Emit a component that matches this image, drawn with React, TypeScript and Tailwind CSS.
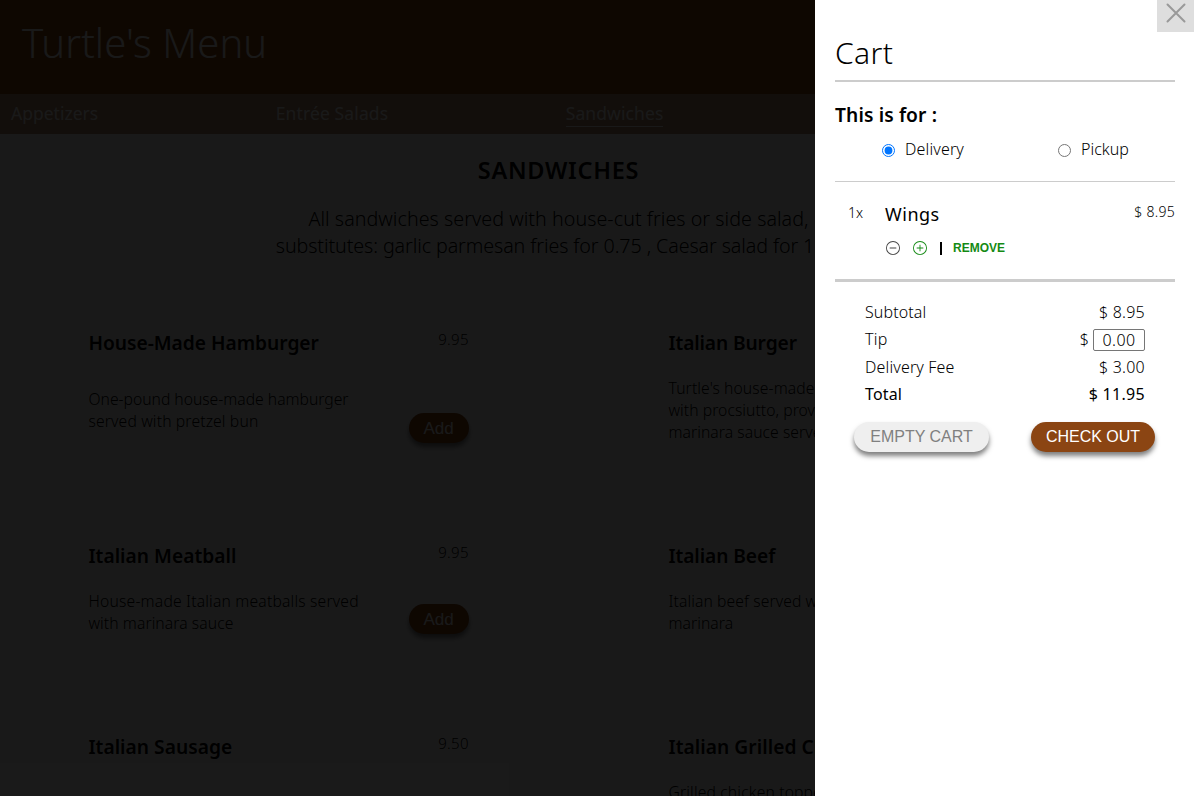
import React from 'react';

type MenuEntry = {
  title: string;
  titleTracking: string;
  price?: string;
  lines: { text: string; tracking: string }[];
  addable?: boolean;
};

type MenuRowData = { bodyHeight: string; entries: MenuEntry[] };

const menuRows: MenuRowData[] = [
  {
    bodyHeight: 'h-[66px]',
    entries: [
      {
        title: 'House-Made Hamburger',
        titleTracking: 'tracking-[-0.02px]',
        price: '9.95',
        lines: [
          { text: 'One-pound house-made hamburger', tracking: 'tracking-[-0.01px]' },
          { text: 'served with pretzel bun', tracking: 'tracking-[0.14px]' },
        ],
        addable: true,
      },
      {
        title: 'Italian Burger',
        titleTracking: 'tracking-[-0.12px]',
        lines: [
          { text: "Turtle's house-made", tracking: 'tracking-[0.1px]' },
          { text: 'with procsiutto, provolone', tracking: 'tracking-[0.05px]' },
          { text: 'marinara sauce served', tracking: 'tracking-[0.05px]' },
        ],
      },
    ],
  },
  {
    bodyHeight: 'h-[44px]',
    entries: [
      {
        title: 'Italian Meatball',
        titleTracking: 'tracking-[0.02px]',
        price: '9.95',
        lines: [
          { text: 'House-made Italian meatballs served', tracking: 'tracking-[0.18px]' },
          { text: 'with marinara sauce', tracking: 'tracking-[0.07px]' },
        ],
        addable: true,
      },
      {
        title: 'Italian Beef',
        titleTracking: 'tracking-[-0.08px]',
        lines: [
          { text: 'Italian beef served with', tracking: 'tracking-[0.1px]' },
          { text: 'marinara', tracking: 'tracking-[0.05px]' },
        ],
      },
    ],
  },
  {
    bodyHeight: 'h-[66px]',
    entries: [
      { title: 'Italian Sausage', titleTracking: 'tracking-[0.02px]', price: '9.50', lines: [] },
      {
        title: 'Italian Grilled Chicken',
        titleTracking: 'tracking-[0.05px]',
        lines: [
          { text: 'Grilled chicken topped', tracking: 'tracking-[0.14px]' },
          { text: '', tracking: '' },
          { text: '', tracking: '' },
        ],
      },
    ],
  },
];

function MenuItem({ entry, bodyHeight }: { entry: MenuEntry; bodyHeight: string }) {
  return (
    <article className="w-[380.5px] shrink-0">
      <div className="flex h-[49px] items-start justify-between whitespace-nowrap">
        <h3 className={`pt-1 text-[19.2px] leading-6 font-semibold ${entry.titleTracking}`}>{entry.title}</h3>
        {entry.price && (
          <span className="text-[15px] leading-6 font-light tracking-[0.37px]">{entry.price}</span>
        )}
      </div>
      <div className={`flex justify-between ${bodyHeight}`}>
        <div className="self-center pt-px text-[15.7px] leading-[22px] font-light whitespace-nowrap">
          {entry.lines.map((line, i) => (
            <p key={i} className={`min-h-[22px] ${line.tracking}`}>{line.text}</p>
          ))}
        </div>
        {entry.addable && (
          <button className="-mb-px h-[30px] w-[60px] self-end rounded-full bg-[#8b4513] pt-px pr-px font-['Liberation_Sans'] text-[17px] leading-[29px] text-white shadow-[0_4px_5px_rgba(0,0,0,0.5)]">
            Add
          </button>
        )}
      </div>
    </article>
  );
}

function MenuPage() {
  return (
    <div className="relative h-full w-[815px] shrink-0 overflow-hidden bg-white text-black">
      <header className="flex h-[94px] items-center bg-[#8b4513] pb-2 pl-[22px]">
        <h1 className="text-[40px] leading-[48px] font-light tracking-[0.1px] whitespace-nowrap text-white">Turtle's Menu</h1>
      </header>
      <nav className="flex h-10 items-start gap-[177.5px] bg-[#b48c6e] pt-[7px] pl-[11px] text-[17.5px] leading-[25px] whitespace-nowrap text-white">
        <a>Appetizers</a>
        <a className="tracking-[0.13px]">Entrée Salads</a>
        <a className="border-b border-white tracking-[0.09px]">Sandwiches</a>
      </nav>
      <main>
        <div className="w-[1117px] text-center">
          <h2 className="pt-[18px] text-[23.5px] leading-9 font-semibold tracking-[0.72px]">SANDWICHES</h2>
          <div className="pt-[17px] text-[19.7px] leading-[27px] font-light">
            <p className="tracking-[0.04px]">All sandwiches served with house-cut fries or side salad,</p>
            <p className="tracking-[-0.1px]">substitutes: garlic parmesan fries for 0.75 , Caesar salad for 1.50</p>
          </div>
        </div>
        <div className="flex flex-col gap-[98px] pt-[68px] pl-[88.5px]">
          {menuRows.map((row, i) => (
            <div key={i} className="flex gap-[199.5px]">
              {row.entries.map((entry) => (
                <MenuItem key={entry.title} entry={entry} bodyHeight={row.bodyHeight} />
              ))}
            </div>
          ))}
        </div>
      </main>
      <div className="absolute inset-0 bg-black/90" />
    </div>
  );
}

function CircleIcon({ plus = false }: { plus?: boolean }) {
  return (
    <svg width="14" height="14" viewBox="0 0 16 16" fill="currentColor">
      <path d="M8 15A7 7 0 1 1 8 1a7 7 0 0 1 0 14m0 1A8 8 0 1 0 8 0a8 8 0 0 0 0 16" />
      {plus ? (
        <path d="M8 4a.5.5 0 0 1 .5.5v3h3a.5.5 0 0 1 0 1h-3v3a.5.5 0 0 1-1 0v-3h-3a.5.5 0 0 1 0-1h3v-3A.5.5 0 0 1 8 4" />
      ) : (
        <path d="M4 8a.5.5 0 0 1 .5-.5h7a.5.5 0 0 1 0 1h-7A.5.5 0 0 1 4 8" />
      )}
    </svg>
  );
}

function CartPanel() {
  return (
    <aside className="flex h-full w-[379px] shrink-0 flex-col bg-white text-black">
      <div className="flex h-8 justify-end">
        <button aria-label="Close" className="flex h-8 w-[37px] items-start justify-center bg-[#dedede] pt-[2px] pl-px text-[#999]">
          <svg width="22" height="22" viewBox="0 0 22 22" fill="none" stroke="currentColor" strokeWidth="2" strokeLinecap="round">
            <path d="M2.5 2.5 19.5 19.5M19.5 2.5 2.5 19.5" />
          </svg>
        </button>
      </div>
      <div className="mr-[19px] ml-5 flex flex-col pt-0.5 font-light">
        <h2 className="h-12 border-b-2 border-[#ccc] pt-px text-[30px] leading-9 tracking-[0.4px]">Cart</h2>
        <h3 className="h-11 pt-[21px] text-[19.2px] leading-6 font-semibold tracking-[0.12px]">This is for :</h3>
        <div className="flex h-14 border-b border-[#ccc] pt-[11px] pl-[47px] text-base leading-6">
          <label className="flex h-6 w-[176px] items-start">
            <input type="radio" name="service" defaultChecked className="mt-[7px] mr-2.5 h-[13px] w-[13px]" />
            <span className="tracking-[0.15px]">Delivery</span>
          </label>
          <label className="flex h-6 items-start">
            <input type="radio" name="service" className="mt-[7px] mr-2.5 h-[13px] w-[13px]" />
            <span>Pickup</span>
          </label>
        </div>
        <div className="flex h-[100px] border-b-[3px] border-[#ccc] pt-[19px]">
          <span className="w-[50px] pl-[13px] text-sm leading-6">1x</span>
          <div className="grow">
            <p className="h-6 pt-px text-lg leading-6 font-normal tracking-[0.5px]">Wings</p>
            <div className="mt-4 flex h-[15px] items-start pl-px">
              <button className="mr-[13px] text-[#444]"><CircleIcon /></button>
              <button className="mr-[13px] text-[#148a14]"><CircleIcon plus /></button>
              <span className="mt-px mr-[11.5px] h-[13px] w-[1.5px] bg-black" />
              <button className="font-['Liberation_Sans'] text-xs leading-[14px] font-bold text-[#148a14]">REMOVE</button>
            </div>
          </div>
          <span className="-mt-0.5 text-sm leading-[25px] tracking-[0.3px]">$ 8.95</span>
        </div>
        <div className="flex flex-col px-[30px] pt-[17px] text-base leading-[27.33px]">
          <div className="flex justify-between"><span className="tracking-[0.1px]">Subtotal</span><span className="tracking-[0.25px]">$ 8.95</span></div>
          <div className="flex h-[27.33px] justify-between">
            <span className="tracking-[0.3px]">Tip</span>
            <span className="flex items-center">
              <span className="mr-1">$</span>
              <input defaultValue="0.00" className="mt-px h-[22px] w-[52px] rounded-[2px] border border-[#767676] text-center text-base font-light tracking-[0.45px]" />
            </span>
          </div>
          <div className="flex justify-between"><span className="tracking-[0.15px]">Delivery Fee</span><span className="tracking-[0.25px]">$ 3.00</span></div>
          <div className="flex justify-between font-normal"><span className="tracking-[0.15px]">Total</span><span className="tracking-[0.3px]">$ 11.95</span></div>
        </div>
        <div className="flex justify-between pt-[14px] pr-5 pl-[19px] font-['Liberation_Sans'] text-base leading-[30px] font-normal">
          <button className="h-[30px] w-[135px] rounded-full bg-[#efefef] text-[#808080] shadow-[0_4px_5px_rgba(0,0,0,0.5)]">EMPTY CART</button>
          <button className="h-[30px] w-[124px] rounded-full bg-[#8b4513] text-white shadow-[0_4px_5px_rgba(0,0,0,0.5)]">CHECK OUT</button>
        </div>
      </div>
    </aside>
  );
}

export default function App() {
  return (
    <div className="flex h-[796px] w-[1194px] overflow-hidden font-['Noto_Sans',sans-serif]">
      <MenuPage />
      <CartPanel />
    </div>
  );
}
